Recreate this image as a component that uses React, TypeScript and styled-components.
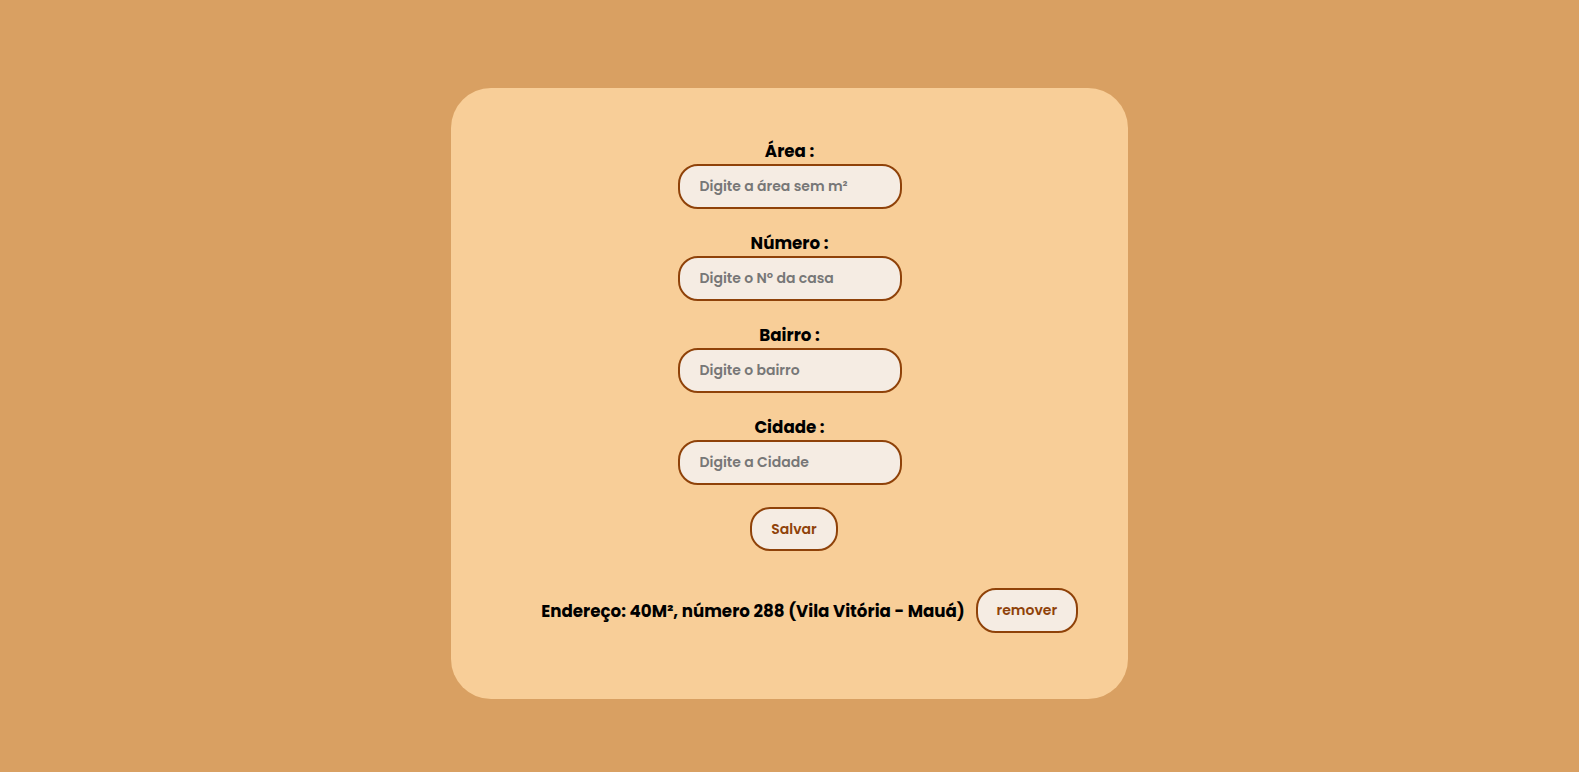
import React from "react";
import styled, { createGlobalStyle } from "styled-components";

const Global = createGlobalStyle`
  html, body { margin: 0; padding: 0; }
  body {
    background: #d9a062;
    font-family: "Poppins", "Open Sans", "Noto Sans", sans-serif;
    min-height: 772px;
  }
  * { box-sizing: border-box; }
`;

const Page = styled.div`
  display: flex;
  justify-content: center;
  padding-top: 88px;
`;

const Card = styled.form`
  width: 677px;
  background: #f8ce98;
  border-radius: 40px;
  padding: 51px 0 66px;
  display: flex;
  flex-direction: column;
  align-items: center;
`;

const Field = styled.div`
  display: flex;
  flex-direction: column;
  align-items: center;
  gap: 1px;
  margin-bottom: 22px;
`;

const Label = styled.label`
  font-size: 16.7px;
  font-weight: 700;
  line-height: 24px;
  color: #000;
`;

const Input = styled.input`
  width: 224px;
  height: 45px;
  border: 2px solid #8f4209;
  border-radius: 20px;
  background: #f5ece3;
  padding: 0 20px;
  font-family: inherit;
  font-size: 14px;
  font-weight: 600;
  outline: none;
  &::placeholder { color: #777; }
`;

const Button = styled.button<{ $w: number; $h: number; $shift?: number }>`
  width: ${(p) => p.$w}px;
  height: ${(p) => p.$h}px;
  margin-left: ${(p) => p.$shift ?? 0}px;
  border: 2px solid #8f4209;
  border-radius: 20px;
  background: #f5ece3;
  color: #8f4209;
  font-family: inherit;
  font-size: 14px;
  font-weight: 600;
  padding: 0;
  cursor: pointer;
`;

const List = styled.ul`
  list-style: none;
  margin: 37px 0 0;
  padding: 0 0 0 40px;
  display: flex;
  flex-direction: column;
  align-items: center;
`;

const Item = styled.li`
  display: flex;
  align-items: center;
  gap: 11px;
`;

const Address = styled.span`
  font-size: 16.7px;
  font-weight: 700;
  color: #000;
`;

const fields = [
  { label: "Área :", ph: "Digite a área sem m²" },
  { label: "Número :", ph: "Digite o Nº da casa" },
  { label: "Bairro :", ph: "Digite o bairro" },
  { label: "Cidade :", ph: "Digite a Cidade" },
];

export default function App() {
  return (
    <>
      <Global />
      <Page>
        <Card onSubmit={(e) => e.preventDefault()}>
          {fields.map((f) => (
            <Field key={f.label}>
              <Label>{f.label}</Label>
              <Input placeholder={f.ph} />
            </Field>
          ))}
          <Button type="submit" $w={88} $h={44} $shift={9}>Salvar</Button>
          <List>
            <Item>
              <Address>Endereço: 40M², número 288 (Vila Vitória - Mauá)</Address>
              <Button type="button" $w={102} $h={45}>remover</Button>
            </Item>
          </List>
        </Card>
      </Page>
    </>
  );
}
